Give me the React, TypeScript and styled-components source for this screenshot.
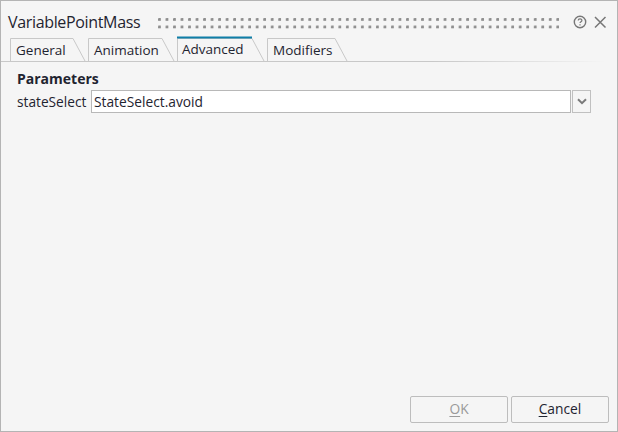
import React from 'react';
import styled, { createGlobalStyle } from 'styled-components';

const GlobalStyle = createGlobalStyle`
  html, body {
    margin: 0;
    padding: 0;
    background: #f5f5f5;
  }
  body {
    font-family: "Open Sans", "Noto Sans", sans-serif;
    color: #1a1a1a;
  }
`;

const Dialog = styled.div`
  box-sizing: border-box;
  width: 618px;
  height: 432px;
  border: 1px solid #b4b4b4;
  background: #f5f5f5;
  display: flex;
  flex-direction: column;
`;

const TitleBar = styled.div`
  display: flex;
  align-items: center;
  height: 35px;
  padding: 0 10px 0 7px;
  flex: none;
`;

const Title = styled.div`
  font-size: 16px;
  letter-spacing: -0.34px;
  color: #1f2430;
  width: 150px;
  flex: none;
  margin-top: 6px;
`;

const Grip = styled.div`
  flex: 1;
  height: 11px;
  margin: 9px 8px 0 0;
  background-image: radial-gradient(circle at 1.5px 1.5px, #8f8f8f 1.3px, transparent 1.8px);
  background-size: 7.53px 7.5px;
`;

const IconButton = styled.button`
  border: 0;
  background: none;
  padding: 0;
  width: 14px;
  height: 14px;
  margin-left: 6px;
  margin-top: 7px;
  display: flex;
`;

const TabStrip = styled.div`
  display: flex;
  height: 25px;
  padding-left: 9px;
  flex: none;
  border-bottom: 1px solid;
  border-image: linear-gradient(to right, #c8c8c8 70%, #f5f5f5 98%) 1;
`;

const TabShape = styled.div<{ $width: number }>`
  position: relative;
  width: ${(p) => p.$width}px;
  height: 25px;
  flex: none;
  margin-right: 2px;
`;

const TabLabel = styled.span<{ $active?: boolean }>`
  position: relative;
  display: block;
  padding-left: ${(p) => (p.$active ? 5 : 6)}px;
  font-size: 13.5px;
  line-height: ${(p) => (p.$active ? 27 : 29)}px;
  color: #1f2430;
`;

const TabOutline = styled.svg`
  position: absolute;
  left: 0;
  top: 0;
`;

const Body = styled.div`
  flex: 1;
  display: flex;
  flex-direction: column;
  padding: 8px 26px 0 16px;
`;

const GroupTitle = styled.div`
  font-size: 14px;
  font-weight: 700;
  color: #1f2430;
  line-height: 17px;
`;

const ParamRow = styled.div`
  display: flex;
  align-items: center;
  margin-top: 3px;
  gap: 4px;
`;

const ParamLabel = styled.label`
  font-size: 13.7px;
  width: 70px;
  flex: none;
  color: #1f2430;
`;

const Combo = styled.div`
  flex: 1;
  display: flex;
  height: 23px;
  gap: 1px;
`;

const ComboInput = styled.div`
  flex: 1;
  box-sizing: border-box;
  border: 1px solid #b8b8b8;
  background: #fff;
  font-size: 13.75px;
  line-height: 21px;
  padding-left: 2px;
  color: #1f2430;
`;

const ComboButton = styled.div`
  box-sizing: border-box;
  width: 19px;
  border: 1px solid #c0c0c0;
  display: flex;
  align-items: center;
  justify-content: center;
`;

const Footer = styled.div`
  display: flex;
  justify-content: flex-end;
  gap: 3px;
  padding: 0 8px 8px 0;
`;

const ActionButton = styled.button`
  box-sizing: border-box;
  width: 98px;
  height: 27px;
  border: 1px solid #bdbdbd;
  border-radius: 2px;
  background: #f5f5f5;
  font-family: inherit;
  font-size: 13.8px;
  color: #1f2430;
  padding: 0 0 2px;
  &:disabled {
    color: #9a9a9a;
  }
  u {
    text-underline-offset: 2px;
  }
`;

type TabDef = { label: string; width: number; active?: boolean };

const tabs: TabDef[] = [
  { label: 'General', width: 76 },
  { label: 'Animation', width: 87 },
  { label: 'Advanced', width: 88, active: true },
  { label: 'Modifiers', width: 81 },
];

const Tab = ({ label, width, active }: TabDef) => (
  <TabShape $width={width}>
    <TabOutline width={width} height={25} fill="none">
      <path d={`M0.5 25V2.5H${width - 13}L${width - 1} 25`} stroke="#c8c8c8" />
      {active && <path d={`M0 1.5H${width - 13}`} stroke="#0f7fa8" strokeWidth={2} />}
    </TabOutline>
    <TabLabel $active={active}>{label}</TabLabel>
  </TabShape>
);

export default function App() {
  return (
    <>
      <GlobalStyle />
      <Dialog>
        <TitleBar>
          <Title>VariablePointMass</Title>
          <Grip />
          <IconButton>
            <svg width="14" height="14" viewBox="0 0 14 14" fill="none" stroke="#777">
              <circle cx="7" cy="7" r="5.7" strokeWidth="1.4" />
              <path d="M5.2 5.6c0-2.3 3.7-2.3 3.7-.2 0 1.3-1.9 1.3-1.9 2.7" strokeWidth="1.2" />
              <path d="M7 9.3v1.2" strokeWidth="1.2" />
            </svg>
          </IconButton>
          <IconButton>
            <svg width="14" height="14" viewBox="0 0 14 14" fill="none" stroke="#777" strokeWidth="1.5">
              <path d="M2 2l10.5 10.5M12.5 2L2 12.5" />
            </svg>
          </IconButton>
        </TitleBar>
        <TabStrip>
          {tabs.map((t) => (
            <Tab key={t.label} {...t} />
          ))}
        </TabStrip>
        <Body>
          <GroupTitle>Parameters</GroupTitle>
          <ParamRow>
            <ParamLabel>stateSelect</ParamLabel>
            <Combo>
              <ComboInput>StateSelect.avoid</ComboInput>
              <ComboButton>
                <svg width="10" height="7" viewBox="0 0 10 7" fill="none" stroke="#7a7a7a" strokeWidth="2">
                  <path d="M1 1.2l4 4 4-4" />
                </svg>
              </ComboButton>
            </Combo>
          </ParamRow>
        </Body>
        <Footer>
          <ActionButton disabled>
            <u>O</u>K
          </ActionButton>
          <ActionButton>
            <u>C</u>ancel
          </ActionButton>
        </Footer>
      </Dialog>
    </>
  );
}
